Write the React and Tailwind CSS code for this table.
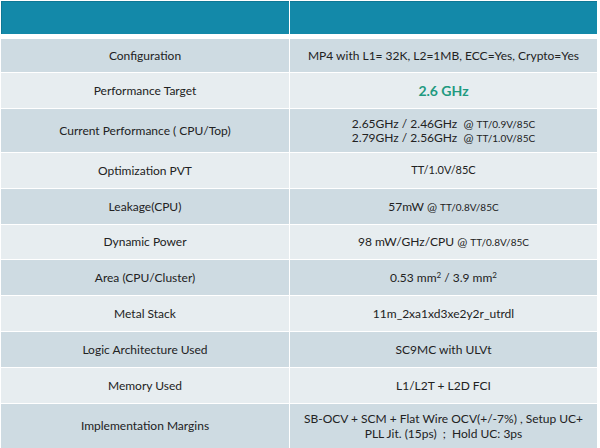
import React from "react";

const rows = [
  { label: "Configuration", h: "h-[33px]", dark: true, value: <span>MP4 with L1= 32K, L2=1MB, ECC=Yes, Crypto=Yes</span> },
  { label: "Performance Target", h: "h-[35px]", dark: false, value: <span className="text-[14px] font-bold text-[#1f9a80]">2.6 GHz</span> },
  {
    label: "Current Performance ( CPU/Top)",
    h: "h-[43px]",
    dark: true,
    value: (
      <div className="flex flex-col items-center leading-[14px]">
        <span>2.65GHz / 2.46GHz&nbsp; @ <span className="text-[10px]">TT/0.9V/85C</span></span>
        <span>2.79GHz / 2.56GHz&nbsp; @ <span className="text-[10px]">TT/1.0V/85C</span></span>
      </div>
    ),
  },
  { label: "Optimization PVT", h: "h-[35px]", dark: false, value: <span className="text-[11px]">TT/1.0V/85C</span> },
  { label: "Leakage(CPU)", h: "h-[35px]", dark: true, value: <span>57mW @ <span className="text-[10px]">TT/0.8V/85C</span></span> },
  { label: "Dynamic Power", h: "h-[34px]", dark: false, value: <span>98 mW/GHz/CPU @ <span className="text-[10px]">TT/0.8V/85C</span></span> },
  { label: "Area (CPU/Cluster)", h: "h-[35px]", dark: true, value: <span>0.53 mm<sup className="text-[8px]">2</sup> / 3.9 mm<sup className="text-[8px]">2</sup></span> },
  { label: "Metal Stack", h: "h-[35px]", dark: false, value: <span>11m_2xa1xd3xe2y2r_utrdl</span> },
  { label: "Logic Architecture Used", h: "h-[35px]", dark: true, value: <span>SC9MC with ULVt</span> },
  { label: "Memory Used", h: "h-[35px]", dark: false, value: <span>L1/L2T + L2D FCI</span> },
  {
    label: "Implementation Margins",
    h: "h-[44px]",
    dark: true,
    value: (
      <div className="flex flex-col items-center leading-[15px]">
        <span>SB-OCV + SCM + Flat Wire OCV(+/-7%) , Setup UC+</span>
        <span>PLL Jit. (15ps)&nbsp; ;&nbsp; Hold UC: 3ps</span>
      </div>
    ),
  },
];

export default function App() {
  return (
    <div
      className="w-[600px] h-[448px] overflow-hidden bg-white pl-[1px] pt-[1px] text-[12px] text-[#222222]"
      style={{ fontFamily: "Lato, 'Open Sans', sans-serif" }}
    >
      <div className="w-[596px] flex flex-col">
        <div className="grid grid-cols-[288px_307px] gap-x-[1px] h-[33px]">
          <div className="bg-[#1389a9] border-l border-t border-[#0f7895]" />
          <div className="bg-[#1389a9] border-t border-[#0f7895]" />
        </div>
        <div className="h-[5px]" />
        <div className="flex flex-col gap-y-[1px]">
          {rows.map((r, i) => (
            <div key={i} className={`grid grid-cols-[288px_307px] gap-x-[1px] ${r.h}`}>
              <div className={`flex items-center justify-center ${r.dark ? "bg-[#cedbe2]" : "bg-[#e7edf0]"}`}>
                {r.label}
              </div>
              <div className={`flex items-center justify-center text-center ${r.dark ? "bg-[#cedbe2]" : "bg-[#e7edf0]"}`}>
                {r.value}
              </div>
            </div>
          ))}
        </div>
      </div>
    </div>
  );
}
